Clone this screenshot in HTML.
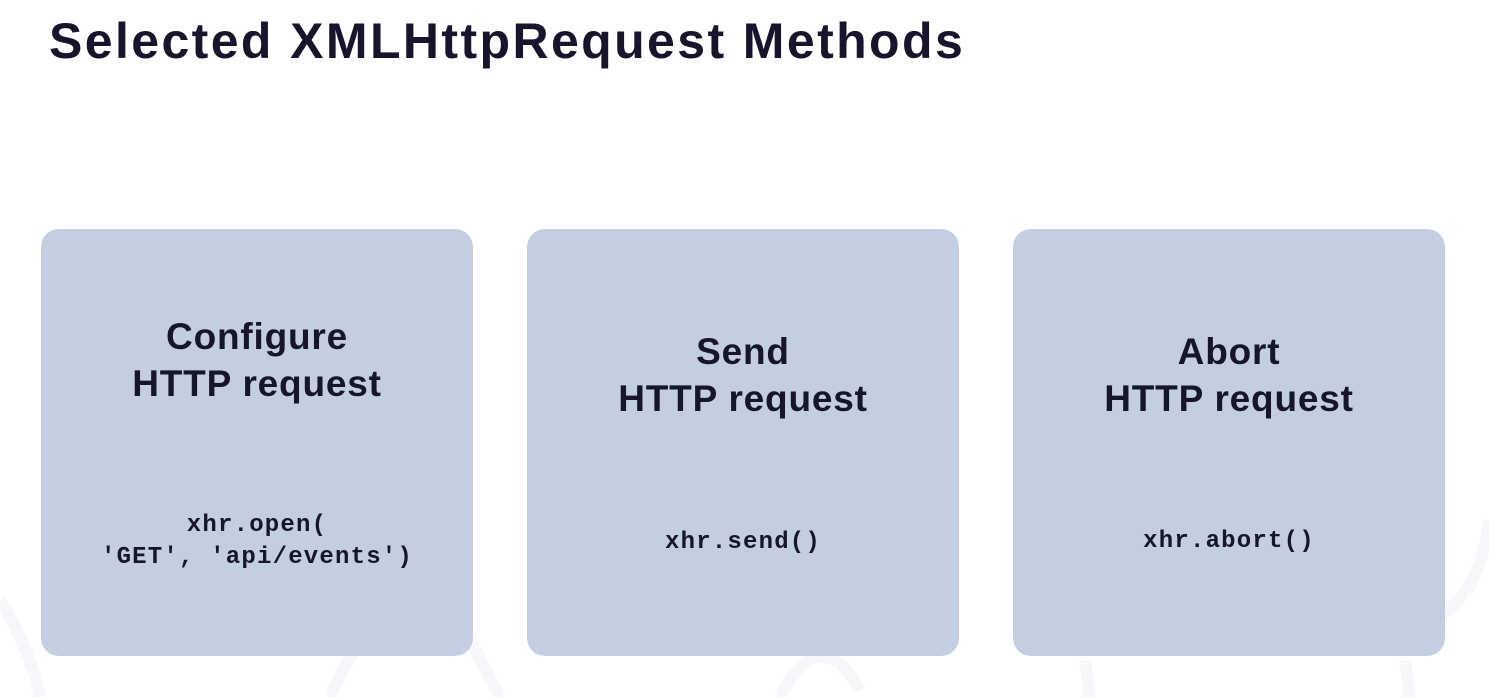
<!DOCTYPE html>
<html><head><meta charset="utf-8"><style>
html,body{margin:0;padding:0;width:1489px;height:697px;background:#fff;overflow:hidden;position:relative;font-family:"Liberation Sans",sans-serif;color:#16152c}
h1{position:absolute;left:49px;top:12px;margin:0;font-size:50px;font-weight:bold;letter-spacing:2.4px;white-space:nowrap}
.card{position:absolute;top:229px;width:432px;height:427px;background:#c3cfe1;border-radius:18px}
.t{position:absolute;left:0;right:0;text-align:center;font-weight:bold;font-size:37px;line-height:47px;letter-spacing:0.8px}
.c{position:absolute;left:0;right:0;text-align:center;font-family:"Liberation Mono",monospace;font-weight:bold;font-size:24px;line-height:32px;letter-spacing:1.2px;white-space:pre}
</style></head><body>
<svg style="position:absolute;left:0;top:0" width="1489" height="697"><g fill="none" stroke="#f6f7fb" stroke-width="12">
<path d="M0 600 Q30 650 40 697"/><path d="M330 697 Q400 540 470 640 L500 697"/><path d="M780 697 Q820 620 860 690"/><path d="M1090 697 L1085 660"/><path d="M1410 697 L1405 660"/><path d="M1430 620 Q1480 600 1489 520"/></g></svg>
<h1>Selected XMLHttpRequest Methods</h1>
<div class="card" style="left:41px"><div class="t" style="top:84px">Configure<br>HTTP request</div><div class="c" style="top:281px">xhr.open(
'GET', 'api/events')</div></div>
<div class="card" style="left:527px"><div class="t" style="top:99px">Send<br>HTTP request</div><div class="c" style="top:298px">xhr.send()</div></div>
<div class="card" style="left:1013px"><div class="t" style="top:99px">Abort<br>HTTP request</div><div class="c" style="top:297px">xhr.abort()</div></div>
</body></html>
